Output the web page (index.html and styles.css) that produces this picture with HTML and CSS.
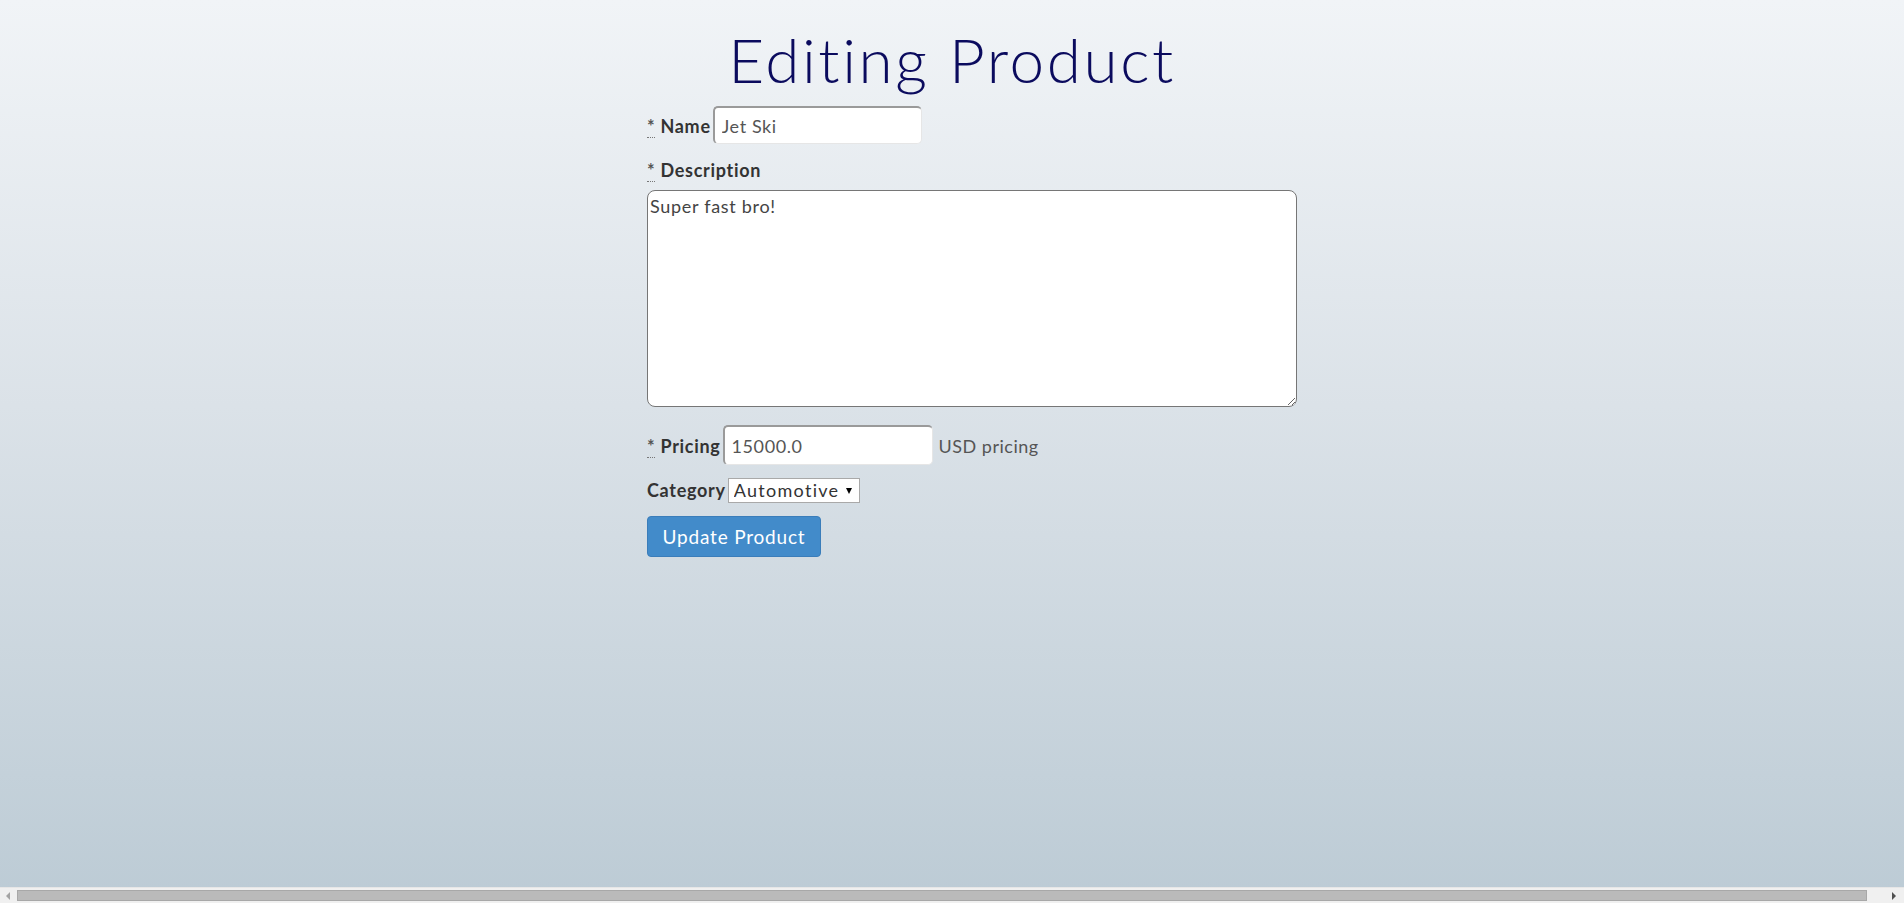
FILE: index.html
```html
<!DOCTYPE html>
<html lang="en">
<head>
<meta charset="utf-8">
<title>Editing Product</title>
<link rel="stylesheet" href="styles.css">
</head>
<body>
<main class="page">
  <h1 class="title">Editing Product</h1>
  <form class="product-form">
    <div class="row row-name">
      <label class="label"><abbr class="req" title="required">*</abbr> Name</label>
      <input class="field field-name" type="text" value="Jet Ski">
    </div>
    <div class="row-desc">
      <label class="label"><abbr class="req" title="required">*</abbr> Description</label>
    </div>
    <textarea class="area">Super fast bro!</textarea>
    <div class="row row-price">
      <label class="label"><abbr class="req" title="required">*</abbr> Pricing</label>
      <input class="field field-price" type="text" value="15000.0">
      <span class="hint">USD pricing</span>
    </div>
    <div class="row row-cat">
      <label class="label">Category</label>
      <span class="select-wrap"><select class="select"><option>Automotive</option></select></span>
    </div>
    <button class="btn" type="button">Update Product</button>
  </form>
</main>
<div class="hscroll">
  <span class="arrow arrow-left"></span>
  <span class="thumb"></span>
  <span class="arrow arrow-right"></span>
</div>
</body>
</html>
```
FILE: styles.css
```css
html, body {
  margin: 0;
  padding: 0;
}
body {
  min-height: 100vh;
  background: linear-gradient(180deg, #f1f4f7 0%, #dbe2e8 45%, #bccbd5 100%);
  font-family: Lato, "Open Sans", "DejaVu Sans", sans-serif;
  font-variant-ligatures: none;
  color: #333;
  overflow: hidden;
}
.page {
  padding-top: 22px;
}
.title {
  margin: 0;
  text-align: center;
  font-size: 62px;
  font-weight: 300;
  letter-spacing: 2.6px;
  line-height: 74px;
  color: #0b0b5e;
}
.product-form {
  margin-left: calc(50% - 305px);
  width: 650px;
  padding-top: 10px;
}
.row {
  display: flex;
  align-items: baseline;
  gap: 2px;
}
.label {
  font-size: 18px;
  font-weight: 700;
  letter-spacing: 0.7px;
  line-height: 22px;
  color: #333;
}
.req {
  text-decoration: none;
  border-bottom: 1px dotted #777;
  color: #555;
  font-weight: 700;
}
.field {
  box-sizing: border-box;
  font-family: inherit;
  font-size: 18px;
  letter-spacing: 0.6px;
  color: #555;
  background: #fff;
  border-style: solid;
  border-width: 2px 1px 1px 2px;
  border-color: #9a9a9a #e6e6e6 #e6e6e6 #9a9a9a;
  border-radius: 5px;
  padding: 0 7px;
  outline: none;
}
.field-name {
  width: 209px;
  height: 38px;
}
.field-price {
  width: 210px;
  height: 40px;
}
.row-desc {
  margin-top: 15px;
}
.area {
  display: block;
  box-sizing: border-box;
  margin-top: 9px;
  width: 650px;
  height: 217px;
  padding: 4px 2px;
  border: 1px solid #767676;
  border-radius: 8px;
  background: #fff;
  font-family: inherit;
  font-size: 18px;
  letter-spacing: 0.7px;
  line-height: 22px;
  color: #444;
  resize: both;
  outline: none;
}
.row-price {
  margin-top: 18px;
}
.hint {
  margin-left: 4px;
  font-size: 18px;
  letter-spacing: 0.5px;
  color: #555;
}
.row-cat {
  margin-top: 13px;
}
.select-wrap {
  position: relative;
  display: inline-block;
}
.select-wrap::after {
  content: "";
  position: absolute;
  right: 8px;
  top: 10px;
  border-left: 3.5px solid transparent;
  border-right: 3.5px solid transparent;
  border-top: 6px solid #000;
  pointer-events: none;
}
.select {
  -webkit-appearance: none;
  appearance: none;
  box-sizing: border-box;
  width: 132px;
  height: 25px;
  padding: 0 0 0 5px;
  border: 1px solid #a9a9a9;
  border-radius: 0;
  background: #fff;
  font-family: inherit;
  font-size: 18px;
  letter-spacing: 1.3px;
  line-height: 23px;
  color: #333;
}
.btn {
  display: block;
  box-sizing: border-box;
  margin-top: 13px;
  width: 174px;
  height: 41px;
  padding: 0;
  border: 1px solid #3a7dba;
  border-radius: 4px;
  background: #428bca;
  color: #fff;
  font-family: inherit;
  font-size: 19px;
  letter-spacing: 0.8px;
  cursor: pointer;
}
.hscroll {
  position: fixed;
  left: 0;
  right: 0;
  bottom: 0;
  height: 15px;
  background: #f0f0f0;
  border-top: 1px solid #e6e6e6;
}
.thumb {
  position: absolute;
  left: 17px;
  right: 37px;
  top: 2px;
  height: 11px;
  background: #bababa;
  border: 1px solid #a8a8a8;
  box-sizing: border-box;
}
.arrow {
  position: absolute;
  top: 4px;
  width: 0;
  height: 0;
  border-top: 4px solid transparent;
  border-bottom: 4px solid transparent;
}
.arrow-left {
  left: 6px;
  border-right: 4px solid #a3a3a3;
}
.arrow-right {
  right: 8px;
  border-left: 4px solid #505050;
}
```
